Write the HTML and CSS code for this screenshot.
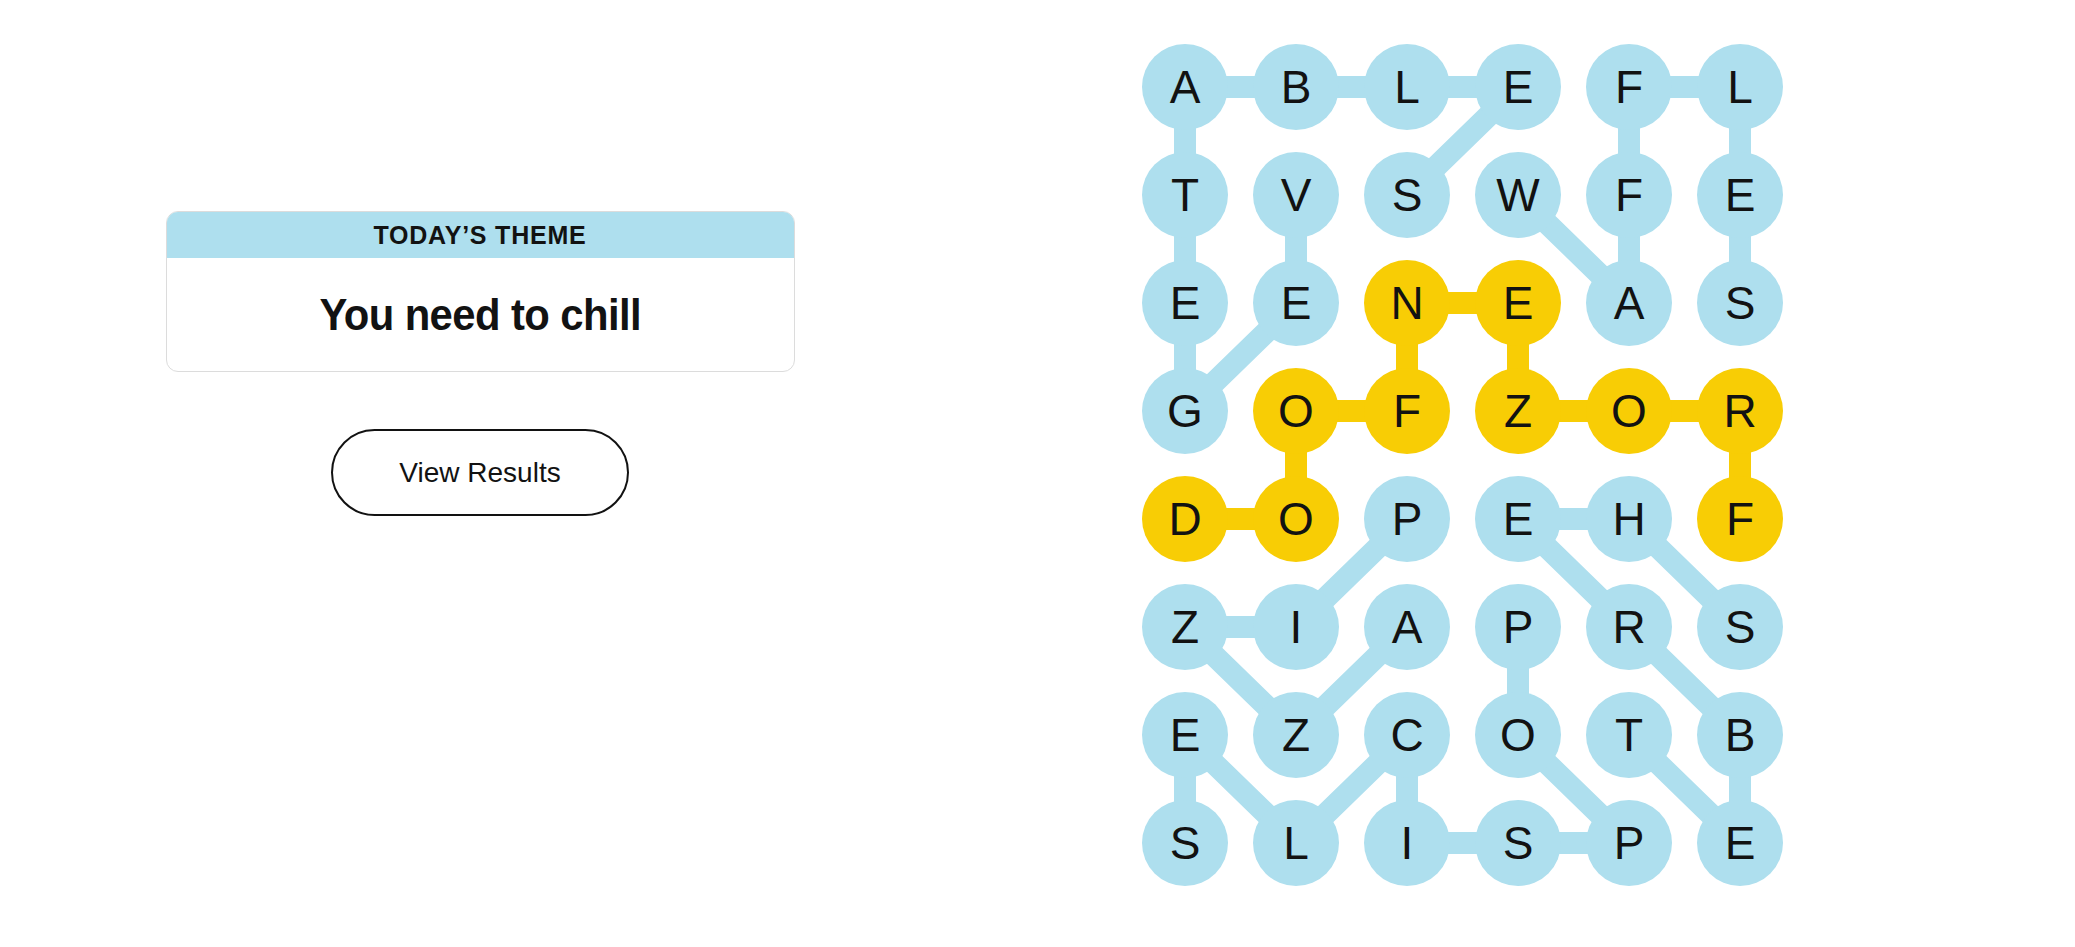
FILE: index.html
```html
<!DOCTYPE html>
<html lang="en">
<head>
<meta charset="utf-8">
<title>Strands</title>
<link rel="stylesheet" href="styles.css">
</head>
<body>
<main class="game">
  <section class="side">
    <div class="theme-card">
      <div class="theme-head">TODAY’S THEME</div>
      <div class="theme-body"><h1 class="theme-title">You need to chill</h1></div>
    </div>
    <button class="results-btn" type="button">View Results</button>
  </section>
  <section class="board">
    <svg class="links" width="641" height="842" viewBox="0 0 641 842" aria-hidden="true">
      <g fill="none" stroke-width="22" stroke-linejoin="round">
        <polyline class="link-blue" points="154,151 154,259 43,367 43,259 43,151 43,43 154,43 265,43 376,43 265,151"/>
        <polyline class="link-blue" points="376,151 487,259 487,151 487,43 598,43 598,151 598,259"/>
        <polyline class="link-blue" points="265,475 154,583 43,583 154,691 265,583"/>
        <polyline class="link-blue" points="376,583 376,691 487,799 376,799 265,799 265,691 154,799 43,691 43,799"/>
        <polyline class="link-blue" points="598,583 487,475 376,475 487,583 598,691 598,799 487,691"/>
        <polyline class="link-yellow" points="598,475 598,367 487,367 376,367 376,259 265,259 265,367 154,367 154,475 43,475"/>
      </g>
    </svg>
    <div class="grid">
      <div class="cell">A</div><div class="cell">B</div><div class="cell">L</div><div class="cell">E</div><div class="cell">F</div><div class="cell">L</div>
      <div class="cell">T</div><div class="cell">V</div><div class="cell">S</div><div class="cell">W</div><div class="cell">F</div><div class="cell">E</div>
      <div class="cell">E</div><div class="cell">E</div><div class="cell span">N</div><div class="cell span">E</div><div class="cell">A</div><div class="cell">S</div>
      <div class="cell">G</div><div class="cell span">O</div><div class="cell span">F</div><div class="cell span">Z</div><div class="cell span">O</div><div class="cell span">R</div>
      <div class="cell span">D</div><div class="cell span">O</div><div class="cell">P</div><div class="cell">E</div><div class="cell">H</div><div class="cell span">F</div>
      <div class="cell">Z</div><div class="cell">I</div><div class="cell">A</div><div class="cell">P</div><div class="cell">R</div><div class="cell">S</div>
      <div class="cell">E</div><div class="cell">Z</div><div class="cell">C</div><div class="cell">O</div><div class="cell">T</div><div class="cell">B</div>
      <div class="cell">S</div><div class="cell">L</div><div class="cell">I</div><div class="cell">S</div><div class="cell">P</div><div class="cell">E</div>
    </div>
  </section>
</main>
</body>
</html>
```
FILE: styles.css
```css
html, body {
  margin: 0;
  padding: 0;
  background: #ffffff;
}

body {
  font-family: "Liberation Sans", Arial, sans-serif;
  color: #121212;
}

.game {
  display: flex;
  align-items: flex-start;
  height: 947px;
}

.side {
  width: 960px;
  padding-top: 211px;
  display: flex;
  flex-direction: column;
  align-items: center;
}

.theme-card {
  width: 629px;
  box-sizing: border-box;
  border: 1px solid #dcdcdc;
  border-radius: 12px;
  overflow: hidden;
  background: #fff;
}

.theme-head {
  height: 47px;
  margin: -1px -1px 0;
  background: #aedfee;
  border-radius: 12px 12px 0 0;
  display: flex;
  align-items: center;
  justify-content: center;
  font-size: 25px;
  font-weight: 700;
  letter-spacing: 0.8px;
  color: #121212;
  padding-top: 2px;
  box-sizing: border-box;
}

.theme-body {
  height: 113px;
  display: flex;
  align-items: center;
  justify-content: center;
}

.theme-title {
  display: inline-block;
  margin: 0;
  font-size: 44px;
  font-weight: 700;
  letter-spacing: -0.6px;
  line-height: 1;
  color: #121212;
  transform: scaleX(0.95);
}

.results-btn {
  margin-top: 57px;
  width: 298px;
  height: 87px;
  border: 2px solid #121212;
  border-radius: 44px;
  background: #fff;
  font-family: "Liberation Sans", Arial, sans-serif;
  font-size: 28px;
  color: #121212;
  padding: 0;
}

.board {
  position: relative;
  margin-left: 182px;
  margin-top: 44px;
  width: 641px;
  height: 842px;
}

.links {
  position: absolute;
  left: 0;
  top: 0;
}

.link-blue {
  stroke: #aedfee;
}

.link-yellow {
  stroke: #f8cd05;
}

.grid {
  position: relative;
  display: grid;
  grid-template-columns: repeat(6, 86px);
  grid-auto-rows: 86px;
  column-gap: 25px;
  row-gap: 22px;
}

.cell {
  width: 86px;
  height: 86px;
  border-radius: 50%;
  background: #aedfee;
  display: flex;
  align-items: center;
  justify-content: center;
  font-size: 46px;
  color: #121212;
}

.cell.span {
  background: #f8cd05;
}
```
